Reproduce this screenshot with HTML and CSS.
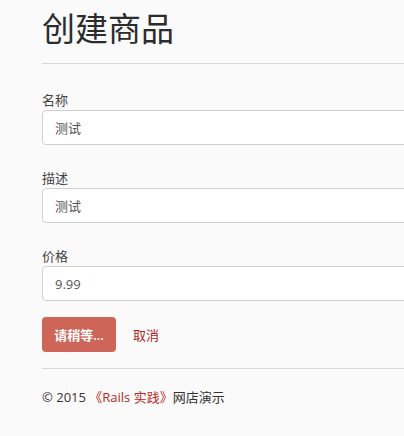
FILE: index.html
```html
<!DOCTYPE html>
<html lang="zh-CN">
<head>
  <meta charset="UTF-8" />
  <title>创建商品</title>
  <link rel="stylesheet" href="styles.css">
</head>
<body>
  <div class="container">
    <h1>创建商品</h1>
    <hr>
    <form class="product-form">
      <div class="field">
        <label>名称</label>
        <input type="text" value="测试">
      </div>
      <div class="field">
        <label>描述</label>
        <input type="text" value="测试">
      </div>
      <div class="field">
        <label>价格</label>
        <input type="text" value="9.99">
      </div>
      <div class="actions">
        <button type="button" class="btn-submit">请稍等...</button>
        <a href="#" class="cancel">取消</a>
      </div>
    </form>
    <hr>
    <footer class="footer">© 2015 <a href="#">《Rails 实践》</a>网店演示</footer>
  </div>
</body>
</html>
```

FILE: styles.css
```css
html, body { margin: 0; padding: 0; overflow: hidden; }
body { font-family: "Open Sans", "Noto Sans CJK SC", sans-serif; background: #fafafa; color: #333; font-size: 13px; }
.container { width: 560px; padding: 0 0 0 42px; }
h1 { font-size: 33px; font-weight: 400; line-height: 1.1; margin: 11px 0 0; color: #2c2c2c; }
hr { border: 0; border-top: 1px solid #d6d6d6; margin: 16px 0 0; }
.product-form { padding-top: 27px; }
.field { margin-bottom: 24px; }
.field label { display: block; line-height: 18px; margin-bottom: 1px; color: #444; }
.field input { display: block; box-sizing: border-box; width: 100%; height: 35px; padding: 0 12px; border: 1px solid #cfcfcf; border-radius: 4px; background: #fff; font: inherit; font-size: 13px; color: #555; }
.field:nth-child(3) { margin-bottom: 16px; }
.actions { display: flex; align-items: center; gap: 17px; }
.btn-submit { width: 74px; height: 35px; border: 0; border-radius: 4px; background: #cd6658; color: #fff; font: inherit; font-weight: 600; font-size: 13px; padding: 0; }
.cancel { color: #b0261f; text-decoration: none; }
.actions + hr { margin-top: 19px; }
.footer { padding-top: 18px; }
.footer a { color: #b52b27; text-decoration: none; }
```
